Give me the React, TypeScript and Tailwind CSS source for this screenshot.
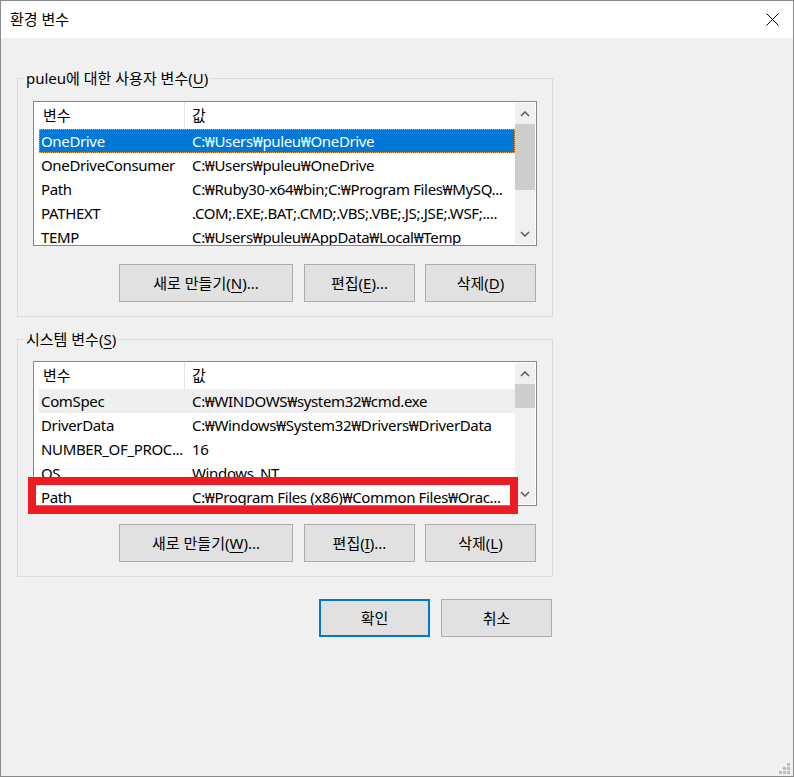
import React from 'react';
import clsx from 'clsx';

type Row = [string, string];

const userRows: Row[] = [
  ['OneDrive', 'C:₩Users₩puleu₩OneDrive'],
  ['OneDriveConsumer', 'C:₩Users₩puleu₩OneDrive'],
  ['Path', 'C:₩Ruby30-x64₩bin;C:₩Program Files₩MySQ...'],
  ['PATHEXT', '.COM;.EXE;.BAT;.CMD;.VBS;.VBE;.JS;.JSE;.WSF;....'],
  ['TEMP', 'C:₩Users₩puleu₩AppData₩Local₩Temp'],
];

const systemRows: Row[] = [
  ['ComSpec', 'C:₩WINDOWS₩system32₩cmd.exe'],
  ['DriverData', 'C:₩Windows₩System32₩Drivers₩DriverData'],
  ['NUMBER_OF_PROC...', '16'],
  ['OS', 'Windows_NT'],
  ['Path', 'C:₩Program Files (x86)₩Common Files₩Orac...'],
];

const Chevron = ({ down }: { down?: boolean }) => (
  <svg width="10" height="6" viewBox="0 0 10 6" fill="none">
    <path
      d={down ? 'M1 1 L5 5 L9 1' : 'M1 5 L5 1 L9 5'}
      stroke="#606060"
      strokeWidth="1.6"
    />
  </svg>
);

function Scrollbar({ thumb }: { thumb: string }) {
  return (
    <div className="py-[1px] pr-[1px] flex">
      <div className="w-[20px] bg-[#f0f0f0] flex flex-col">
        <div className="h-[21px] flex items-center justify-center shrink-0">
          <Chevron />
        </div>
        <div className={clsx('bg-[#cdcdcd] shrink-0', thumb)} />
        <div className="flex-1" />
        <div className="h-[21px] flex items-center justify-center shrink-0">
          <Chevron down />
        </div>
      </div>
    </div>
  );
}

function VarList({
  rows,
  selected,
  soft,
  thumb,
}: {
  rows: Row[];
  selected?: number;
  soft?: number;
  thumb: string;
}) {
  return (
    <div className="h-[145px] border border-[#828790] bg-white flex">
      <div className="w-[481px] flex flex-col overflow-hidden">
        <div className="h-[27px] flex shrink-0">
          <div className="w-[151px] h-full border-r border-[#e5e5e5] pl-[9px] flex items-center">변수</div>
          <div className="pl-[7px] flex items-center">값</div>
        </div>
        <div className="pl-[5px] flex flex-col tracking-[-0.35px]">
          {rows.map((r, i) => (
            <div
              key={i}
              className={clsx(
                'h-[24px] flex items-center shrink-0',
                i === selected &&
                  'bg-[#0078d7] text-white outline outline-1 outline-dotted outline-[#f0a040] -outline-offset-1',
                i === soft && 'bg-[#efefef]'
              )}
            >
              <div className="w-[151px] pl-[2px] whitespace-nowrap overflow-hidden">{r[0]}</div>
              <div className="flex-1 pl-[2px] whitespace-nowrap overflow-hidden">{r[1]}</div>
            </div>
          ))}
        </div>
      </div>
      <Scrollbar thumb={thumb} />
    </div>
  );
}

function Btn({
  pre,
  mn,
  post,
  w,
  primary,
}: {
  pre: string;
  mn?: string;
  post?: string;
  w: string;
  primary?: boolean;
}) {
  return (
    <div
      className={clsx(
        'h-[38px] bg-[#e1e1e1] flex items-center justify-center',
        primary ? 'border-2 border-[#0078d7]' : 'border border-[#adadad]',
        w
      )}
    >
      <span className="whitespace-nowrap">
        {pre}
        {mn && <span className="underline underline-offset-[3px]">{mn}</span>}
        {post}
      </span>
    </div>
  );
}

function Group({
  title,
  mn,
  top,
  children,
}: {
  title: string;
  mn: string;
  top: string;
  children: React.ReactNode;
}) {
  return (
    <fieldset className="w-[536px] border border-[#dcdcdc]">
      <legend className="ml-[6px] px-[2px] leading-[20px]">
        {title}(<span className="underline underline-offset-[3px]">{mn}</span>)
      </legend>
      <div className={clsx('px-[15px] pb-[14px]', top)}>{children}</div>
    </fieldset>
  );
}

export default function App() {
  return (
    <div className="relative w-[794px] h-[777px] border border-[#8a8a8a] bg-[#f0f0f0] flex flex-col text-[15px] text-black font-['Noto_Sans','Noto_Sans_CJK_KR',sans-serif]">
      <div className="h-[37px] bg-white flex items-center justify-between pl-[9px] pr-[14px] shrink-0">
        <span>환경 변수</span>
        <svg width="13" height="13" viewBox="0 0 13 13">
          <path d="M0.5 0.5 L12.5 12.5 M12.5 0.5 L0.5 12.5" stroke="#000" strokeWidth="1" />
        </svg>
      </div>

      <div className="pl-[16px] pt-[30px] flex flex-col">
        <Group title="puleu에 대한 사용자 변수" mn="U" top="pt-[13px]">
          <VarList rows={userRows} selected={0} thumb="h-[66px]" />
          <div className="mt-[18px] flex justify-end pr-[1px]">
            <Btn pre="새로 만들기(" mn="N" post=")..." w="w-[174px]" />
            <div className="w-[11px]" />
            <Btn pre="편집(" mn="E" post=")..." w="w-[111px]" />
            <div className="w-[10px]" />
            <Btn pre="삭제(" mn="D" post=")" w="w-[111px]" />
          </div>
        </Group>

        <div className="mt-[12px]">
          <Group title="시스템 변수" mn="S" top="pt-[12px]">
            <VarList rows={systemRows} soft={0} thumb="h-[24px]" />
            <div className="mt-[18px] flex justify-end pr-[1px]">
              <Btn pre="새로 만들기(" mn="W" post=")..." w="w-[174px]" />
              <div className="w-[11px]" />
              <Btn pre="편집(" mn="I" post=")..." w="w-[111px]" />
              <div className="w-[10px]" />
              <Btn pre="삭제(" mn="L" post=")" w="w-[111px]" />
            </div>
          </Group>
        </div>

        <div className="w-[536px] mt-[22px] flex justify-end pr-[1px]">
          <Btn pre="확인" w="w-[111px]" primary />
          <div className="w-[11px]" />
          <Btn pre="취소" w="w-[111px]" />
        </div>
      </div>

      {/* annotation box over the system Path row */}
      <div className="absolute left-[27px] top-[476px] w-[490px] h-[37px] border-[8px] border-[#ed1c24]" />

      {/* resize grip */}
      <svg className="absolute right-[2px] bottom-[1px]" width="12" height="12" viewBox="0 0 12 12">
        <rect x="8" y="0" width="3" height="3" fill="#bcbcbc" />
        <rect x="4" y="4" width="3" height="3" fill="#bcbcbc" />
        <rect x="8" y="4" width="3" height="3" fill="#bcbcbc" />
        <rect x="0" y="8" width="3" height="3" fill="#bcbcbc" />
        <rect x="4" y="8" width="3" height="3" fill="#bcbcbc" />
        <rect x="8" y="8" width="3" height="3" fill="#bcbcbc" />
      </svg>
    </div>
  );
}
